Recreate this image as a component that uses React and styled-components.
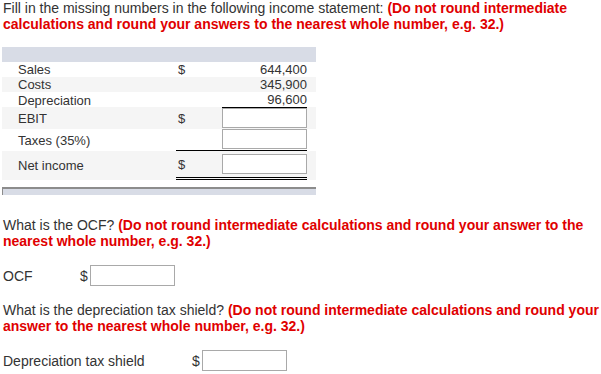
import React from 'react';
import styled, { createGlobalStyle } from 'styled-components';

const GlobalStyle = createGlobalStyle`
  body {
    margin: 0;
    background: #fff;
    font-family: 'Liberation Sans', Arial, sans-serif;
    color: #333;
  }
`

const Page = styled.div`
  width: 598px;
  padding: 0 0 0 3px;
`

const Prompt = styled.p`
  margin: 0;
  font-size: 14px;
  line-height: 16px;
  margin-top: ${p => p.top}px;
`

const Hint = styled.b`
  color: #e00000;
`

const Sheet = styled.div`
  width: 314px;
  margin: 15px 0 0 -1px;
  font-size: 13px;
`

const HeadBar = styled.div`
  height: 15px;
  background: #d8dce6;
`

const Row = styled.div`
  display: grid;
  grid-template-columns: 174px 46px 85px 9px;
  height: ${p => p.h}px;
  background: ${p => (p.shade ? '#f5f5f5' : '#fff')};
  align-items: center;
`

const Label = styled.span`
  padding-left: 16px;
  line-height: 15px;
`

const Cur = styled.span`
  padding-left: 2px;
  line-height: 15px;
  align-self: stretch;
  display: flex;
  align-items: center;
  border-bottom: ${p => p.rule || 'none'};
`

const Amount = styled.span`
  text-align: right;
  line-height: 15px;
  align-self: stretch;
  border-bottom: ${p => p.rule || 'none'};
`

const Cell = styled.span`
  align-self: stretch;
  display: flex;
  align-items: ${p => p.align || 'center'};
  border-bottom: ${p => p.rule || 'none'};
`

const Box = styled.span`
  display: block;
  box-sizing: border-box;
  width: ${p => p.w || 85}px;
  height: ${p => p.h || 20}px;
  border: 1px solid #a9a9a9;
  background: #fff;
`

const FootBar = styled.div`
  margin-top: 7px;
  height: 8px;
  box-sizing: border-box;
  background: #d8dce6;
  border-top: 2px solid #8c8c8c;
  border-left: 1px solid #8c8c8c;
`

const AnswerRow = styled.div`
  display: flex;
  align-items: center;
  margin-top: ${p => p.top}px;
  font-size: 14px;
  height: 21px;
`

const AnswerLabel = styled.span`
  width: ${p => p.w}px;
`

const Dollar = styled.span`
  width: 10px;
`

function App() {
  return (
    <Page>
      <GlobalStyle />
      <Prompt top={0}>
        Fill in the missing numbers in the following income statement:{' '}
        <Hint>(Do not round intermediate calculations and round your answers to the nearest whole number, e.g. 32.)</Hint>
      </Prompt>

      <Sheet>
        <HeadBar />
        <Row h={15}>
          <Label>Sales</Label>
          <Cur>$</Cur>
          <Amount>644,400</Amount>
        </Row>
        <Row h={15} shade>
          <Label>Costs</Label>
          <span />
          <Amount>345,900</Amount>
        </Row>
        <Row h={15}>
          <Label>Depreciation</Label>
          <span />
          <Amount rule="1px solid #000">96,600</Amount>
        </Row>
        <Row h={22} shade>
          <Label>EBIT</Label>
          <Cur>$</Cur>
          <Cell><Box /></Cell>
        </Row>
        <Row h={22}>
          <Label>Taxes (35%)</Label>
          <Cur rule="1px solid #000" />
          <Cell rule="1px solid #000" align="start"><Box /></Cell>
        </Row>
        <Row h={29} shade>
          <Label>Net income</Label>
          <Cur rule="3px double #000">$</Cur>
          <Cell rule="3px double #000"><Box /></Cell>
        </Row>
        <FootBar />
      </Sheet>

      <Prompt top={22}>
        What is the OCF?{' '}
        <Hint>(Do not round intermediate calculations and round your answer to the nearest whole number, e.g. 32.)</Hint>
      </Prompt>
      <AnswerRow top={16}>
        <AnswerLabel w={77}>OCF</AnswerLabel>
        <Dollar>$</Dollar>
        <Box w={85} h={21} />
      </AnswerRow>

      <Prompt top={16}>
        What is the depreciation tax shield?{' '}
        <Hint>(Do not round intermediate calculations and round your answer to the nearest whole number, e.g. 32.)</Hint>
      </Prompt>
      <AnswerRow top={16}>
        <AnswerLabel w={189}>Depreciation tax shield</AnswerLabel>
        <Dollar>$</Dollar>
        <Box w={85} h={21} />
      </AnswerRow>
    </Page>
  );
}

export default App;
